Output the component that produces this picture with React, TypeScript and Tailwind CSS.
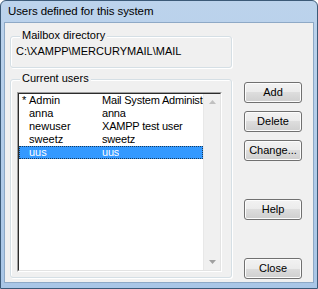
import React from "react";

const users = [
  { name: "Admin", full: "Mail System Administrator", star: true },
  { name: "anna", full: "anna" },
  { name: "newuser", full: "XAMPP test user" },
  { name: "sweetz", full: "sweetz" },
  { name: "uus", full: "uus", selected: true },
];

function GroupBox({
  label,
  className,
  children,
}: {
  label: string;
  className?: string;
  children: React.ReactNode;
}) {
  return (
    <div
      className={`relative rounded-[3px] border border-[#d5dfe5] shadow-[inset_1px_1px_0_#ffffff,1px_1px_0_#ffffff] ${className ?? ""}`}
    >
      <span className="absolute -top-[8px] left-[9px] bg-[#f0f0f0] px-[2px] leading-[13px]">
        {label}
      </span>
      {children}
    </div>
  );
}

function Button({ label }: { label: string }) {
  return (
    <button className="flex h-[21px] w-[58px] items-center justify-center rounded-[3px] border border-[#707070] bg-[linear-gradient(#f2f2f2_0%,#ebebeb_50%,#dddddd_50%,#cfcfcf_100%)] leading-none text-black shadow-[inset_0_0_0_1px_#fcfcfc]">
      {label}
    </button>
  );
}

export default function App() {
  return (
    <div
      className="flex h-[289px] w-[318px] flex-col rounded-t-[6px] border border-[#3c5a78] bg-[linear-gradient(#bcd3ec,#a9c6e6)] text-[11px] text-black"
      style={{ fontFamily: '"Liberation Sans", Arial, sans-serif' }}
    >
      <div className="flex h-[21px] shrink-0 items-center pl-[7px] text-[11.5px] tracking-[-0.1px]">
        Users defined for this system
      </div>
      <div className="mx-[3px] mb-[5px] flex flex-1 gap-[12px] border border-[#8ea9c6] bg-[#f0f0f0] pl-[5px] pr-[9px]">
        <div className="flex w-[222px] flex-col">
          <GroupBox label="Mailbox directory" className="mt-[13px] h-[32px]">
            <div className="pl-[5px] pt-[8px] leading-[13px]">
              C:\XAMPP\MERCURYMAIL\MAIL
            </div>
          </GroupBox>
          <GroupBox label="Current users" className="mt-[11px] h-[199px]">
            <div className="ml-[6px] mt-[12px] h-[180px] w-[205px] border border-b-white border-l-[#a0a0a0] border-r-white border-t-[#a0a0a0]">
              <div className="flex h-full border border-b-[#e3e3e3] border-l-[#2b2b2b] border-r-[#e3e3e3] border-t-[#2b2b2b] bg-white">
                <div className="flex-1 overflow-hidden">
                  {users.map((u) => (
                    <div
                      key={u.name}
                      className={`flex h-[13px] items-center whitespace-nowrap leading-[13px] ${
                        u.selected
                          ? "bg-[#3399ff] text-white outline-1 -outline-offset-1 outline-dotted outline-[#1b3a5a]"
                          : ""
                      }`}
                    >
                      <span className="w-[10px] shrink-0 pl-[3px]">
                        {u.star ? "*" : ""}
                      </span>
                      <span className="w-[73px] shrink-0">{u.name}</span>
                      <span className="overflow-hidden tracking-[-0.2px]">
                        {u.full}
                      </span>
                    </div>
                  ))}
                </div>
                <div className="flex w-[17px] shrink-0 flex-col items-center justify-between border-l border-[#e8e8e8] bg-[#f0f0f0] py-[6px]">
                  <svg width="7" height="4" viewBox="0 0 7 4">
                    <path d="M3.5 0 L7 4 L0 4 Z" fill="#c0c0c0" />
                  </svg>
                  <svg width="7" height="4" viewBox="0 0 7 4">
                    <path d="M0 0 L7 0 L3.5 4 Z" fill="#a0a0a0" />
                  </svg>
                </div>
              </div>
            </div>
          </GroupBox>
        </div>
        <div className="flex flex-col pt-[59px]">
          <Button label="Add" />
          <div className="mt-[8px]">
            <Button label="Delete" />
          </div>
          <div className="mt-[8px]">
            <Button label="Change..." />
          </div>
          <div className="mt-[38px]">
            <Button label="Help" />
          </div>
          <div className="mt-[38px]">
            <Button label="Close" />
          </div>
        </div>
      </div>
    </div>
  );
}
